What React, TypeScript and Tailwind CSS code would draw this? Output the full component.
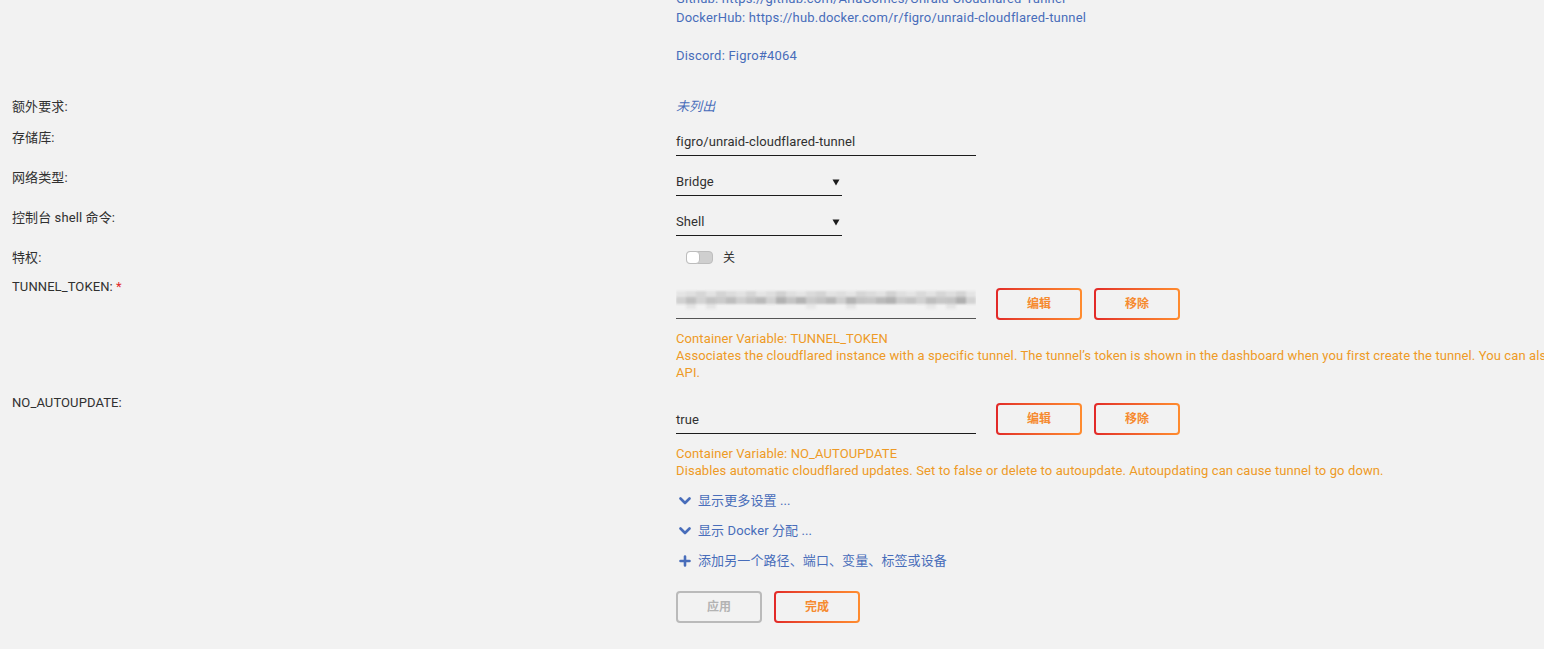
import React from "react";

const FONT = { fontFamily: "Roboto, 'Noto Sans CJK SC', sans-serif" };

function GradBtn({ label, className = "" }: { label: string; className?: string }) {
  return (
    <div className={"rounded-[4px] bg-gradient-to-r from-[#e22828] to-[#ff8c2f] p-[2px] " + className}>
      <div className="flex h-[28px] w-[82px] items-center justify-center rounded-[2px] bg-[#f2f2f2] text-[12px] font-bold text-[#f68a2f]">
        {label}
      </div>
    </div>
  );
}

function Label({ children }: { children: React.ReactNode }) {
  return <div className="w-[676px] shrink-0 pl-[12px] text-[13px] leading-[19px] text-[#303030]">{children}</div>;
}

function Arrow() {
  return (
    <svg width="8" height="8" viewBox="0 0 8 8" className="mr-[2px]">
      <path d="M0.5 1.5 H7.5 L4 7.5 Z" fill="#1c1c1c" />
    </svg>
  );
}

function Chevron() {
  return (
    <svg width="12" height="10" viewBox="0 0 12 10" className="mr-[7px] ml-[3px]">
      <path d="M1.5 2.5 L6 7 L10.5 2.5" fill="none" stroke="#486dba" strokeWidth="2.6" strokeLinecap="round" strokeLinejoin="round" />
    </svg>
  );
}

function Plus() {
  return (
    <svg width="12" height="12" viewBox="0 0 12 12" className="mr-[7px] ml-[3px]">
      <path d="M6 1.5 V10.5 M1.5 6 H10.5" fill="none" stroke="#486dba" strokeWidth="2.6" strokeLinecap="round" />
    </svg>
  );
}

const blurTop = [0.1, 0.14, 0.2, 0.12, 0.22, 0.16, 0.12, 0.2, 0.1, 0.15, 0.25, 0.14, 0.1, 0.18, 0.22, 0.12, 0.15, 0.1, 0.2, 0.16, 0.12, 0.24, 0.14, 0.1, 0.18, 0.12, 0.2, 0.15, 0.22, 0.1];
const blurMid = [0.22, 0.32, 0.2, 0.3, 0.26, 0.34, 0.24, 0.3, 0.36, 0.22, 0.42, 0.3, 0.4, 0.26, 0.3, 0.38, 0.24, 0.4, 0.3, 0.28, 0.36, 0.42, 0.26, 0.3, 0.22, 0.34, 0.28, 0.3, 0.44, 0.2];
const blurBot = [0, 0.1, 0, 0.1, 0, 0, 0, 0, 0, 0, 0, 0, 0, 0.08, 0, 0, 0, 0.1, 0, 0, 0, 0, 0, 0, 0, 0.08, 0, 0.1, 0, 0];

function BlurToken() {
  return (
    <svg width="300" height="22" viewBox="0 0 300 22" className="absolute left-0 top-[-2px]">
      <defs>
        <filter id="b" x="-5%" y="-20%" width="110%" height="140%">
          <feGaussianBlur stdDeviation="1.2" />
        </filter>
      </defs>
      <g filter="url(#b)">
        {blurTop.map((o, i) => (
          <rect key={"t" + i} x={i * 10} y={2} width={10} height={6} fill="#6b6b6b" opacity={o} />
        ))}
        {blurMid.map((o, i) => (
          <rect key={"m" + i} x={i * 10} y={8} width={10} height={7} fill="#5a5a5a" opacity={o} />
        ))}
        {blurBot.map((o, i) => (
          <rect key={"b" + i} x={i * 10} y={15} width={10} height={5} fill="#6b6b6b" opacity={o} />
        ))}
      </g>
    </svg>
  );
}

export default function App() {
  return (
    <div className="h-[649px] w-[1544px] overflow-hidden bg-[#f2f2f2] tracking-[0.1px]" style={FONT}>
      {/* top description block */}
      <div className="mt-[-11px] flex">
        <div className="w-[676px] shrink-0" />
        <div className="text-[13px] leading-[19px] tracking-[0.2px] text-[#486dba]">
          <div>Github: https://github.com/AriaGomes/Unraid-Cloudflared-Tunnel</div>
          <div>DockerHub: https://hub.docker.com/r/figro/unraid-cloudflared-tunnel</div>
          <div className="h-[19px]" />
          <div>Discord: Figro#4064</div>
        </div>
      </div>

      {/* 额外要求 */}
      <div className="mt-[32px] flex">
        <Label>额外要求:</Label>
        <div className="text-[13px] italic leading-[19px] text-[#486dba]">未列出</div>
      </div>

      {/* 存储库 */}
      <div className="mt-[12px] flex">
        <Label>存储库:</Label>
        <div className="flex h-[28px] w-[300px] items-center border-b border-[#1c1c1c] text-[13px] text-[#303030]">
          figro/unraid-cloudflared-tunnel
        </div>
      </div>

      {/* 网络类型 */}
      <div className="mt-[12px] flex">
        <Label>网络类型:</Label>
        <div className="flex h-[28px] w-[166px] items-center justify-between border-b border-[#1c1c1c] pt-[1px] text-[13px] text-[#303030]">
          <span>Bridge</span>
          <Arrow />
        </div>
      </div>

      {/* 控制台 shell 命令 */}
      <div className="mt-[12px] flex">
        <Label>控制台 shell 命令:</Label>
        <div className="flex h-[28px] w-[166px] items-center justify-between border-b border-[#1c1c1c] pt-[1px] text-[13px] text-[#303030]">
          <span>Shell</span>
          <Arrow />
        </div>
      </div>

      {/* 特权 */}
      <div className="mt-[12px] flex">
        <Label>特权:</Label>
        <div className="flex h-[19px] items-center">
          <div className="ml-[10px] flex h-[13px] w-[27px] items-center rounded-[4px] border border-[#bdbdbd] bg-[#cfcfcf]">
            <div className="h-[13px] w-[14px] rounded-[4px] border border-[#bdbdbd] bg-white -ml-[1px]" />
          </div>
          <span className="ml-[10px] text-[12px] text-[#303030]">关</span>
        </div>
      </div>

      {/* TUNNEL_TOKEN */}
      <div className="mt-[10px] flex">
        <Label>
          TUNNEL_TOKEN: <span className="text-[#e22828]">*</span>
        </Label>
        <div>
          <div className="mt-[11px] flex items-start">
            <div className="relative mt-[3px] h-[28px] w-[300px] border-b border-[#555]">
              <BlurToken />
            </div>
            <GradBtn label="编辑" className="ml-[20px]" />
            <GradBtn label="移除" className="ml-[12px]" />
          </div>
          <div className="mt-[10px] text-[13px] leading-[17px] text-[#ee9a26]">
            <div>Container Variable: TUNNEL_TOKEN</div>
            <div className="whitespace-nowrap">
              Associates the cloudflared instance with a specific tunnel. The tunnel’s token is shown in the dashboard when you first create the tunnel. You can also get it from the
            </div>
            <div>API.</div>
          </div>
        </div>
      </div>

      {/* NO_AUTOUPDATE */}
      <div className="mt-[12px] flex">
        <Label>NO_AUTOUPDATE:</Label>
        <div>
          <div className="mt-[10px] flex items-start">
            <div className="mt-[3px] flex h-[28px] w-[300px] items-center border-b border-[#1c1c1c] text-[13px] text-[#303030]">
              true
            </div>
            <GradBtn label="编辑" className="ml-[20px]" />
            <GradBtn label="移除" className="ml-[12px]" />
          </div>
          <div className="mt-[10px] text-[13px] leading-[17px] text-[#ee9a26]">
            <div>Container Variable: NO_AUTOUPDATE</div>
            <div className="whitespace-nowrap">
              Disables automatic cloudflared updates. Set to false or delete to autoupdate. Autoupdating can cause tunnel to go down.
            </div>
          </div>
        </div>
      </div>

      {/* links & buttons */}
      <div className="mt-[7px] flex">
        <div className="w-[676px] shrink-0" />
        <div className="text-[13px] leading-[30px] text-[#486dba]">
          <div className="flex items-center">
            <Chevron />
            显示更多设置 ...
          </div>
          <div className="flex items-center">
            <Chevron />
            显示 Docker 分配 ...
          </div>
          <div className="flex items-center">
            <Plus />
            添加另一个路径、端口、变量、标签或设备
          </div>
          <div className="mt-[15px] flex">
            <div className="flex h-[32px] w-[86px] items-center justify-center rounded-[4px] border-2 border-[#bababa] text-[12px] font-bold leading-none text-[#b3b3b3]">
              应用
            </div>
            <GradBtn label="完成" className="ml-[12px]" />
          </div>
        </div>
      </div>
    </div>
  );
}
